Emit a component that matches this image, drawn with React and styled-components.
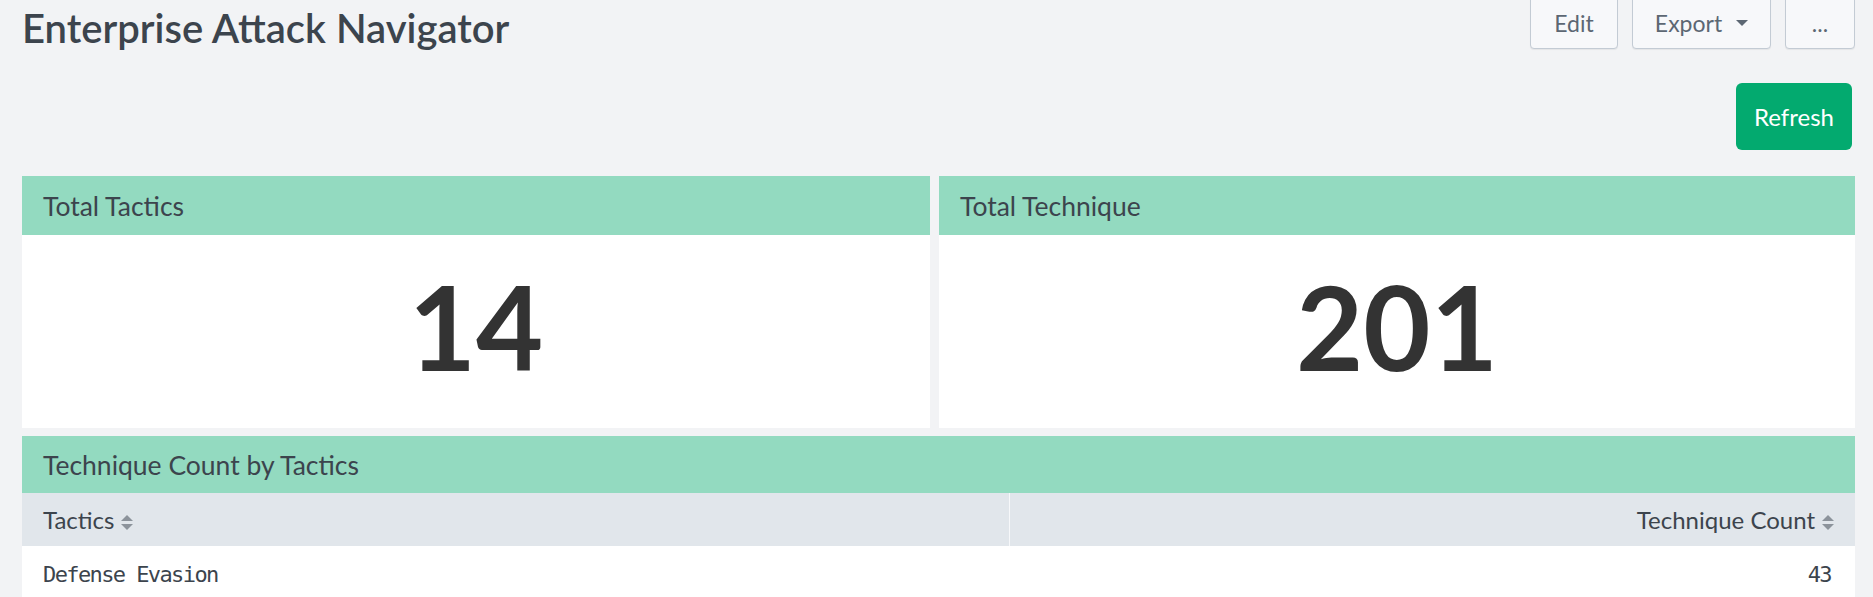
import styled, { createGlobalStyle } from "styled-components";

const GlobalStyle = createGlobalStyle`
  html, body {
    margin:0;
    padding:0;
    background:#f2f3f5;
    overflow:hidden;
  }
  * { box-sizing:border-box; }
`;

const Page = styled.div`
  padding:0 18px 0 22px;
  font-family:Lato, "Open Sans", sans-serif;
  color:#3c444d;
`;

const TopBar = styled.div`
  display:flex;
  justify-content:space-between;
  align-items:flex-start;
  margin-top:-4px;
  height:53px;
`;

const Title = styled.h1`
  margin:0;
  padding-top:10px;
  font-size:40px;
  line-height:44px;
  font-weight:600;
  color:#3c444d;
`;

const Actions = styled.div`
  display:flex;
  gap:14px;
`;

const ToolButton = styled.button`
  display:flex;
  align-items:center;
  justify-content:center;
  gap:14px;
  height:53px;
  padding:0;
  width:${({ $w }) => $w};
  background:#f7f8fa;
  border:1px solid #c3cbd4;
  border-radius:4px;
  box-shadow:0 1px 1px rgba(0,0,0,0.06);
  font-family:inherit;
  font-size:23px;
  color:#5c6773;
  cursor:pointer;
`;

const Caret = styled.span`
  width:0;
  height:0;
  border-left:6px solid transparent;
  border-right:6px solid transparent;
  border-top:6px solid #5c6773;
`;

const RefreshRow = styled.div`
  display:flex;
  justify-content:flex-end;
  padding-right:3px;
  margin-top:34px;
`;

const RefreshButton = styled.button`
  width:116px;
  height:67px;
  background:#03aa6f;
  border:none;
  border-radius:6px;
  color:#fff;
  font-family:inherit;
  font-size:24px;
  cursor:pointer;
`;

const PanelRow = styled.div`
  display:flex;
  gap:9px;
  margin-top:26px;
`;

const Panel = styled.section`
  flex:${({ $grow }) => $grow} 1 0;
  background:#fff;
  display:flex;
  flex-direction:column;
`;

const PanelHeader = styled.div`
  height:${({ $h }) => $h || "59px"};
  background:#93dac0;
  display:flex;
  align-items:center;
  padding:0 21px;
  font-size:26.5px;
  font-weight:400;
  color:#3c444d;
`;

const BigValue = styled.div`
  height:193px;
  display:flex;
  align-items:center;
  justify-content:center;
  font-size:116px;
  font-weight:700;
  color:#333;
  font-variant-numeric:tabular-nums;
  padding-bottom:10px;
`;

const TablePanel = styled.section`
  margin-top:8px;
  background:#fff;
`;

const Table = styled.table`
  width:100%;
  border-collapse:collapse;
`;

const Th = styled.th`
  height:53px;
  background:#e1e6eb;
  padding:0 21px;
  font-size:24px;
  font-weight:400;
  color:#3c444d;
  text-align:${({ $right }) => ($right ? "right" : "left")};
  border-left:${({ $right }) => ($right ? "1px solid #f7f8fa" : "none")};
  width:${({ $w }) => $w || "auto"};
`;

const Td = styled.td`
  padding:16px 24px 24px 21px;
  font-family:"DejaVu Sans Mono", monospace;
  font-size:22px;
  letter-spacing:-1.6px;
  color:#3c444d;
  text-align:${({ $right }) => ($right ? "right" : "left")};
`;

const SortIcon = () => (
  <svg width="12" height="15" viewBox="0 0 12 15" style={{ marginLeft: 7, verticalAlign: "-1px" }}>
    <path d="M6 0 L12 6 H0 Z" fill="#8c939b" />
    <path d="M0 9 H12 L6 15 Z" fill="#8c939b" />
  </svg>
);

export default function App() {
  return (
    <Page>
      <GlobalStyle />
      <TopBar>
        <Title>Enterprise Attack Navigator</Title>
        <Actions>
          <ToolButton $w="88px">Edit</ToolButton>
          <ToolButton $w="139px">Export <Caret /></ToolButton>
          <ToolButton $w="70px">...</ToolButton>
        </Actions>
      </TopBar>
      <RefreshRow>
        <RefreshButton>Refresh</RefreshButton>
      </RefreshRow>
      <PanelRow>
        <Panel $grow={908}>
          <PanelHeader>Total Tactics</PanelHeader>
          <BigValue>14</BigValue>
        </Panel>
        <Panel $grow={916}>
          <PanelHeader>Total Technique</PanelHeader>
          <BigValue>201</BigValue>
        </Panel>
      </PanelRow>
      <TablePanel>
        <PanelHeader $h="57px">Technique Count by Tactics</PanelHeader>
        <Table>
          <thead>
            <tr>
              <Th $w="987px">Tactics<SortIcon /></Th>
              <Th $right>Technique Count<SortIcon /></Th>
            </tr>
          </thead>
          <tbody>
            <tr>
              <Td>Defense Evasion</Td>
              <Td $right>43</Td>
            </tr>
          </tbody>
        </Table>
      </TablePanel>
    </Page>
  );
}
